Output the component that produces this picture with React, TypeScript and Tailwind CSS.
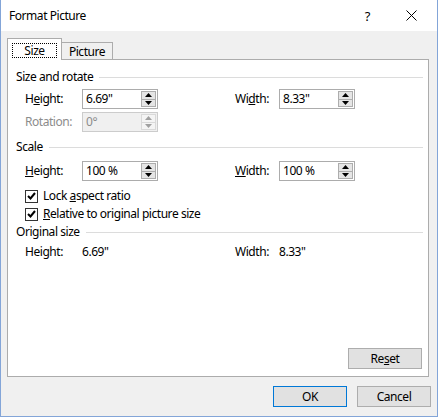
import type { ReactNode } from "react";

const font = { fontFamily: '"Noto Sans", "Liberation Sans", sans-serif' };

function SectionHeader({ title }: { title: string }) {
  return (
    <div className="flex h-[16px] items-center pl-[8px] pr-[5px]">
      <span className="text-black">{title}</span>
      <div className="ml-[6px] h-px flex-1 bg-[#dcdcdc]" />
    </div>
  );
}

function Spinner({ disabled }: { disabled?: boolean }) {
  const arrow = disabled ? "#a0a0a0" : "#000";
  const bg = disabled ? "bg-[#f4f4f4]" : "bg-[#e5e5e5]";
  const border = disabled ? "border-[#d9d9d9]" : "border-[#adadad]";
  return (
    <div className="my-px mr-px flex w-[15px] flex-col">
      <div className={"flex flex-1 items-center justify-center border " + border + " " + bg}>
        <svg width="7" height="4" viewBox="0 0 7 4">
          <path d="M3.5 0 L7 4 L0 4 Z" fill={arrow} />
        </svg>
      </div>
      <div className={"flex flex-1 items-center justify-center border border-t-0 " + border + " " + bg}>
        <svg width="7" height="4" viewBox="0 0 7 4">
          <path d="M0 0 L7 0 L3.5 4 Z" fill={arrow} />
        </svg>
      </div>
    </div>
  );
}

function SpinField({ value, disabled }: { value: string; disabled?: boolean }) {
  return (
    <div
      className={
        "flex h-[20px] w-[76px] border " +
        (disabled ? "border-[#cccccc] bg-[#f0f0f0] text-[#8c8c8c]" : "border-[#acacac] bg-white text-black")
      }
    >
      <div className="flex flex-1 items-center pl-[3px]">{value}</div>
      <Spinner disabled={disabled} />
    </div>
  );
}

function Label({ children, w, gray }: { children: ReactNode; w: string; gray?: boolean }) {
  return <div className={w + " " + (gray ? "text-[#8c8c8c]" : "text-black")}>{children}</div>;
}

function CheckRow({ children }: { children: ReactNode }) {
  return (
    <div className="flex h-[16px] items-center pl-[17px]">
      <div className="flex h-[13px] w-[13px] items-center justify-center border border-[#333] bg-white">
        <svg width="9" height="8" viewBox="0 0 9 8">
          <path d="M1 4 L3.5 6.5 L8 1" stroke="#000" strokeWidth="2" fill="none" />
        </svg>
      </div>
      <span className="ml-[5px]">{children}</span>
    </div>
  );
}

function Btn({ children, primary }: { children: ReactNode; primary?: boolean }) {
  return (
    <button
      className={
        "flex h-[21px] w-[74px] items-center justify-center border bg-[#e1e1e1] text-black " +
        (primary ? "border-[#0078d7]" : "border-[#adadad]")
      }
    >
      {children}
    </button>
  );
}

export default function App() {
  return (
    <div
      style={font}
      className="flex h-[417px] w-[438px] flex-col border-x border-b border-[#83a5d8] bg-[#f0f0f0] text-[12px] leading-[16px] tracking-[-0.45px] text-black"
    >
      {/* title bar */}
      <div className="flex h-[31px] items-center bg-white pl-[8px]">
        <span className="text-[12px] text-black">Format Picture</span>
        <div className="flex-1" />
        <span className="mr-[36px] text-[13px]">?</span>
        <svg width="11" height="11" viewBox="0 0 11 11" className="mr-[20px]">
          <path d="M0.5 0.5 L10.5 10.5 M10.5 0.5 L0.5 10.5" stroke="#000" strokeWidth="1" />
        </svg>
      </div>

      <div className="flex flex-1 flex-col px-[6px] pt-[7px]">
        {/* tabs */}
        <div className="relative z-10 -mb-px flex items-end">
          <div className="flex h-[22px] w-[55px] items-start justify-center border border-b-0 border-[#acacac] bg-white pt-[4px]">
            <span className="flex h-[15px] w-[45px] items-center justify-center border border-dotted border-black">
              Size
            </span>
          </div>
          <div className="flex h-[18px] w-[51px] items-center justify-center border border-b-[#acacac] border-l-0 border-[#acacac] bg-[#f0f0f0] pt-[1px]">
            Picture
          </div>
        </div>

        {/* panel */}
        <div className="flex h-[318px] w-[422px] flex-col border border-[#acacac] bg-white">
          <div className="mt-[9px]">
            <SectionHeader title="Size and rotate" />
          </div>
          <div className="mt-[4px] flex h-[20px] items-center pl-[17px]">
            <div className="flex w-[210px] items-center">
              <Label w="w-[57px]">
                H<span className="underline">e</span>ight:
              </Label>
              <SpinField value={'6.69"'} />
            </div>
            <Label w="w-[44px]">
              Wi<span className="underline">d</span>th:
            </Label>
            <SpinField value={'8.33"'} />
          </div>
          <div className="mt-[3px] flex h-[20px] items-center pl-[17px]">
            <Label w="w-[57px]" gray>
              Rotation:
            </Label>
            <SpinField value="0°" disabled />
          </div>

          <div className="mt-[7px]">
            <SectionHeader title="Scale" />
          </div>
          <div className="mt-[6px] flex h-[20px] items-center pl-[17px]">
            <div className="flex w-[210px] items-center">
              <Label w="w-[57px]">
                <span className="underline">H</span>eight:
              </Label>
              <SpinField value="100 %" />
            </div>
            <Label w="w-[44px]">
              <span className="underline">W</span>idth:
            </Label>
            <SpinField value="100 %" />
          </div>
          <div className="mt-[7px]">
            <CheckRow>
              Lock <span className="underline">a</span>spect ratio
            </CheckRow>
          </div>
          <div className="mt-[2px]">
            <CheckRow>
              <span className="underline">R</span>elative to original picture size
            </CheckRow>
          </div>

          <div className="mt-[2px]">
            <SectionHeader title="Original size" />
          </div>
          <div className="mt-[4px] flex h-[16px] items-center pl-[17px]">
            <div className="flex w-[210px] items-center">
              <Label w="w-[57px]">Height:</Label>
              <span>6.69"</span>
            </div>
            <Label w="w-[44px]">Width:</Label>
            <span>8.33"</span>
          </div>

          <div className="flex-1" />
          <div className="mb-[7px] mr-[6px] flex justify-end">
            <Btn>
              Re<span className="underline">s</span>et
            </Btn>
          </div>
        </div>

        {/* footer buttons */}
        <div className="mt-[9px] flex justify-end gap-[10px]">
          <Btn primary>OK</Btn>
          <Btn>Cancel</Btn>
        </div>
      </div>
    </div>
  );
}
